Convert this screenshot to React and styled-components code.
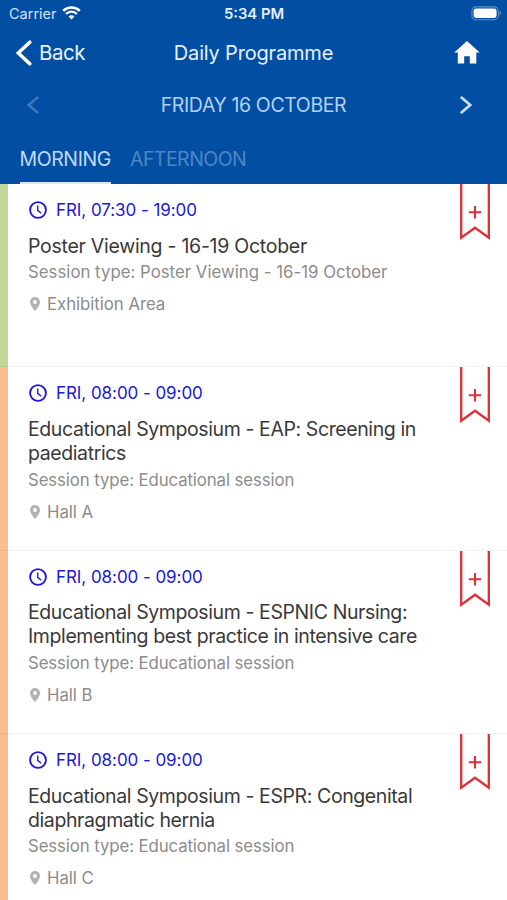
import styled, { createGlobalStyle } from "styled-components";

const sessions = [
  {
    id: 1,
    time: "FRI, 07:30 - 19:00",
    title: ["Poster Viewing - 16-19 October"],
    type: "Poster Viewing - 16-19 October",
    place: "Exhibition Area",
    color: "#c1d799",
    titleTracking: -0.27,
    typeTracking: 0.01,
  },
  {
    id: 2,
    time: "FRI, 08:00 - 09:00",
    title: ["Educational Symposium - EAP: Screening in", "paediatrics"],
    type: "Educational session",
    place: "Hall A",
    color: "#fabd8d",
  },
  {
    id: 3,
    time: "FRI, 08:00 - 09:00",
    title: [
      "Educational Symposium - ESPNIC Nursing:",
      "Implementing best practice in intensive care",
    ],
    type: "Educational session",
    place: "Hall B",
    color: "#fabd8d",
  },
  {
    id: 4,
    time: "FRI, 08:00 - 09:00",
    title: [
      "Educational Symposium - ESPR: Congenital",
      "diaphragmatic hernia",
    ],
    type: "Educational session",
    place: "Hall C",
    color: "#fabd8d",
  },
];

function WifiIcon() {
  return (
    <svg width="19" height="14" viewBox="0 0 19 14" fill="none" stroke="#fff">
      <path d="M1.2 4.8a11.8 11.8 0 0 1 16.6 0" strokeWidth="2.5" />
      <path d="M4.1 8a7.4 7.4 0 0 1 10.800 0" strokeWidth="2.4" />
      <path
        d="M6.5 10.4a4.200 4.200 0 0 1 6 0L9.5 13.4z"
        fill="#fff"
        stroke="none"
      />
    </svg>
  );
}

function BatteryIcon() {
  return (
    <svg width="31" height="15" viewBox="0 0 31 15">
      <rect
        x="0.9"
        y="0.9"
        width="26.4"
        height="12.8"
        rx="4"
        fill="none"
        stroke="#5f8fc6"
        strokeWidth="1.1"
      />
      <rect x="2.6" y="2.6" width="23" height="9.4" rx="2.4" fill="#fff" />
      <path d="M28.6 5.2c1.9.7 1.9 3.5 0 4.2z" fill="#6c98cb" />
    </svg>
  );
}

function Chevron({ width, height, stroke, color, right }) {
  const inset = stroke / 1.6;
  const near = right ? inset : width - inset;
  const far = right ? width - inset : inset;
  return (
    <svg width={width} height={height} fill="none">
      <path
        d={`M${near} ${inset}L${far} ${height / 2}L${near} ${height - inset}`}
        stroke={color}
        strokeWidth={stroke}
        strokeLinecap="round"
      />
    </svg>
  );
}

function HomeIcon() {
  return (
    <svg width="26" height="23" viewBox="0 0 26 23" fill="#fff">
      <path d="M13 0L0.3 11.4H3.8V22.6H10.2V15.2H15.8V22.6H22.3V11.4H25.7Z" />
    </svg>
  );
}

function ClockIcon() {
  return (
    <svg width="18" height="18" viewBox="0 0 18 18" fill="none">
      <circle cx="9" cy="9" r="7.9" stroke="#2018d6" strokeWidth="1.9" />
      <path d="M8.7 4.5v4.9l3.5 2.800" stroke="#2018d6" strokeWidth="1.4" />
    </svg>
  );
}

function PinIcon() {
  return (
    <svg width="10" height="14" viewBox="0 0 10 14">
      <path
        d="M5 0a5 5 0 0 0-5 5c0 3.7 5 9 5 9s5-5.3 5-9a5 5 0 0 0-5-5zm0 6.900a1.900 1.900 0 1 1 0-3.800 1.900 1.900 0 0 1 0 3.800z"
        fill="#b3b3b3"
      />
    </svg>
  );
}

function BookmarkIcon() {
  return (
    <svg width="30" height="57" viewBox="0 0 30 57" fill="none">
      <path
        d="M1.2 0V53.8L15 43.7L28.8 53.8V0"
        stroke="#df3038"
        strokeWidth="2.3"
      />
      <path d="M15 22V34.4M8.8 28.2H21.2" stroke="#df3038" strokeWidth="2.1" />
    </svg>
  );
}

function Session({ session }) {
  return (
    <Row>
      <Stripe $color={session.color} />
      <Details>
        <Time>
          <ClockIcon />
          <span>{session.time}</span>
        </Time>
        <Title $tracking={session.titleTracking}>
          {session.title.map((line) => (
            <TitleLine key={line}>{line}</TitleLine>
          ))}
        </Title>
        <Type $tracking={session.typeTracking}>
          Session type: {session.type}
        </Type>
        <Place>
          <PinIcon />
          <span>{session.place}</span>
        </Place>
      </Details>
      <BookmarkButton aria-label="Add to my programme">
        <BookmarkIcon />
      </BookmarkButton>
    </Row>
  );
}

function App() {
  return (
    <Screen>
      <GlobalStyle />
      <Header>
        <StatusBar>
          <Carrier>
            <span>Carrier</span>
            <WifiIcon />
          </Carrier>
          <Clock>5:34 PM</Clock>
          <BatteryIcon />
        </StatusBar>
        <NavBar>
          <BackButton>
            <Chevron width={16} height={26} stroke={3.6} color="#fff" />
            <span>Back</span>
          </BackButton>
          <PageTitle>Daily Programme</PageTitle>
          <HomeButton aria-label="Home">
            <HomeIcon />
          </HomeButton>
        </NavBar>
        <DateBar>
          <Chevron width={12} height={18} stroke={2.6} color="#4079bb" />
          <DateLabel>FRIDAY 16 OCTOBER</DateLabel>
          <Chevron width={12} height={18} stroke={2.8} color="#c9dff8" right />
        </DateBar>
        <Tabs>
          <Tab $active>MORNING</Tab>
          <Tab>AFTERNOON</Tab>
        </Tabs>
      </Header>
      {sessions.map((session) => (
        <Session key={session.id} session={session} />
      ))}
    </Screen>
  );
}

const GlobalStyle = createGlobalStyle`
  * {
    box-sizing: border-box;
  }

  body {
    margin: 0;
    background-color: #fff;
    font-family: Inter, "Liberation Sans", sans-serif;
  }

  svg {
    display: block;
    flex-shrink: 0;
  }

  button {
    padding: 0;
    border: 0;
    background: none;
    font: inherit;
    color: inherit;
  }
`;

const Screen = styled.div`
  height: 900px;
  overflow: hidden;
  white-space: nowrap;
`;

const Header = styled.header`
  height: 184px;
  background-color: #024ea2;
  color: #fff;
`;

const StatusBar = styled.div`
  display: grid;
  grid-template-columns: 1fr auto 1fr;
  align-items: center;
  height: 27px;
  padding: 0 5px 0 9px;
  font-size: 14.5px;

  > svg {
    justify-self: end;
  }
`;

const Carrier = styled.div`
  display: flex;
  align-items: center;
  gap: 5px;
  color: #cfe2f8;

  svg {
    margin-bottom: 2px;
  }
`;

const Clock = styled.div`
  margin: 0 3px 0 0;
  font-size: 14.8px;
  font-weight: 600;
  color: #e6f1ff;
`;

const NavBar = styled.div`
  display: grid;
  grid-template-columns: 1fr auto 1fr;
  align-items: center;
  height: 51px;
  padding: 0 27px 0 16px;
`;

const BackButton = styled.button`
  display: flex;
  align-items: center;
  gap: 7px;
  font-size: 20.5px;
  letter-spacing: -0.5px;
  color: #e6f1ff;
`;

const PageTitle = styled.div`
  margin-left: 11px;
  font-size: 20px;
  letter-spacing: -0.18px;
  color: #e6f1ff;
`;

const HomeButton = styled.button`
  justify-self: end;
  margin-bottom: 1px;
`;

const DateBar = styled.div`
  display: flex;
  align-items: center;
  justify-content: space-between;
  height: 53px;
  padding: 0 35px 0 27px;
`;

const DateLabel = styled.div`
  margin-left: 8px;
  font-size: 19.5px;
  letter-spacing: -0.38px;
  color: #b5d1f0;
`;

const Tabs = styled.div`
  display: flex;
  gap: 19px;
  height: 53px;
  padding-left: 19.5px;
`;

const Tab = styled.div`
  height: 53px;
  line-height: 56px;
  font-size: 19.5px;
  letter-spacing: ${({ $active }) => ($active ? -0.4 : -0.53)}px;
  color: ${({ $active }) => ($active ? "#c0dbf8" : "#4d85c4")};
  border-bottom: 2px solid ${({ $active }) => ($active ? "#d6e8fb" : "transparent")};
`;

const Row = styled.article`
  position: relative;
  display: flex;
  height: 183.3px;

  &::after {
    content: "";
    position: absolute;
    inset: auto 0 0;
    height: 1px;
    background-color: rgba(0, 0, 0, 0.05);
  }
`;

const Stripe = styled.div`
  width: 8px;
  background-color: ${({ $color }) => $color};
`;

const Details = styled.div`
  flex: 1;
  padding: 14px 0 0 20px;
`;

const Time = styled.div`
  display: flex;
  align-items: center;
  gap: 9px;
  height: 24px;
  padding-left: 1px;
  font-size: 17px;
  letter-spacing: -0.06px;
  color: #2018d6;
`;

const Title = styled.h2`
  margin: 12.8px 0 3.7px;
  font-size: 19.5px;
  line-height: 23.9px;
  letter-spacing: ${({ $tracking = -0.4 }) => $tracking}px;
  font-weight: 400;
  color: #393939;
`;

const TitleLine = styled.div``;

const Type = styled.div`
  font-size: 16.8px;
  line-height: 20px;
  letter-spacing: ${({ $tracking = -0.1 }) => $tracking}px;
  color: #8c8c8c;
`;

const Place = styled.div`
  display: flex;
  align-items: center;
  gap: 7px;
  margin-top: 12px;
  padding-left: 2px;
  font-size: 16.8px;
  line-height: 20px;
  letter-spacing: -0.04px;
  color: #8c8c8c;
`;

const BookmarkButton = styled.button`
  align-self: flex-start;
  margin-right: 17px;
`;

export default App;
